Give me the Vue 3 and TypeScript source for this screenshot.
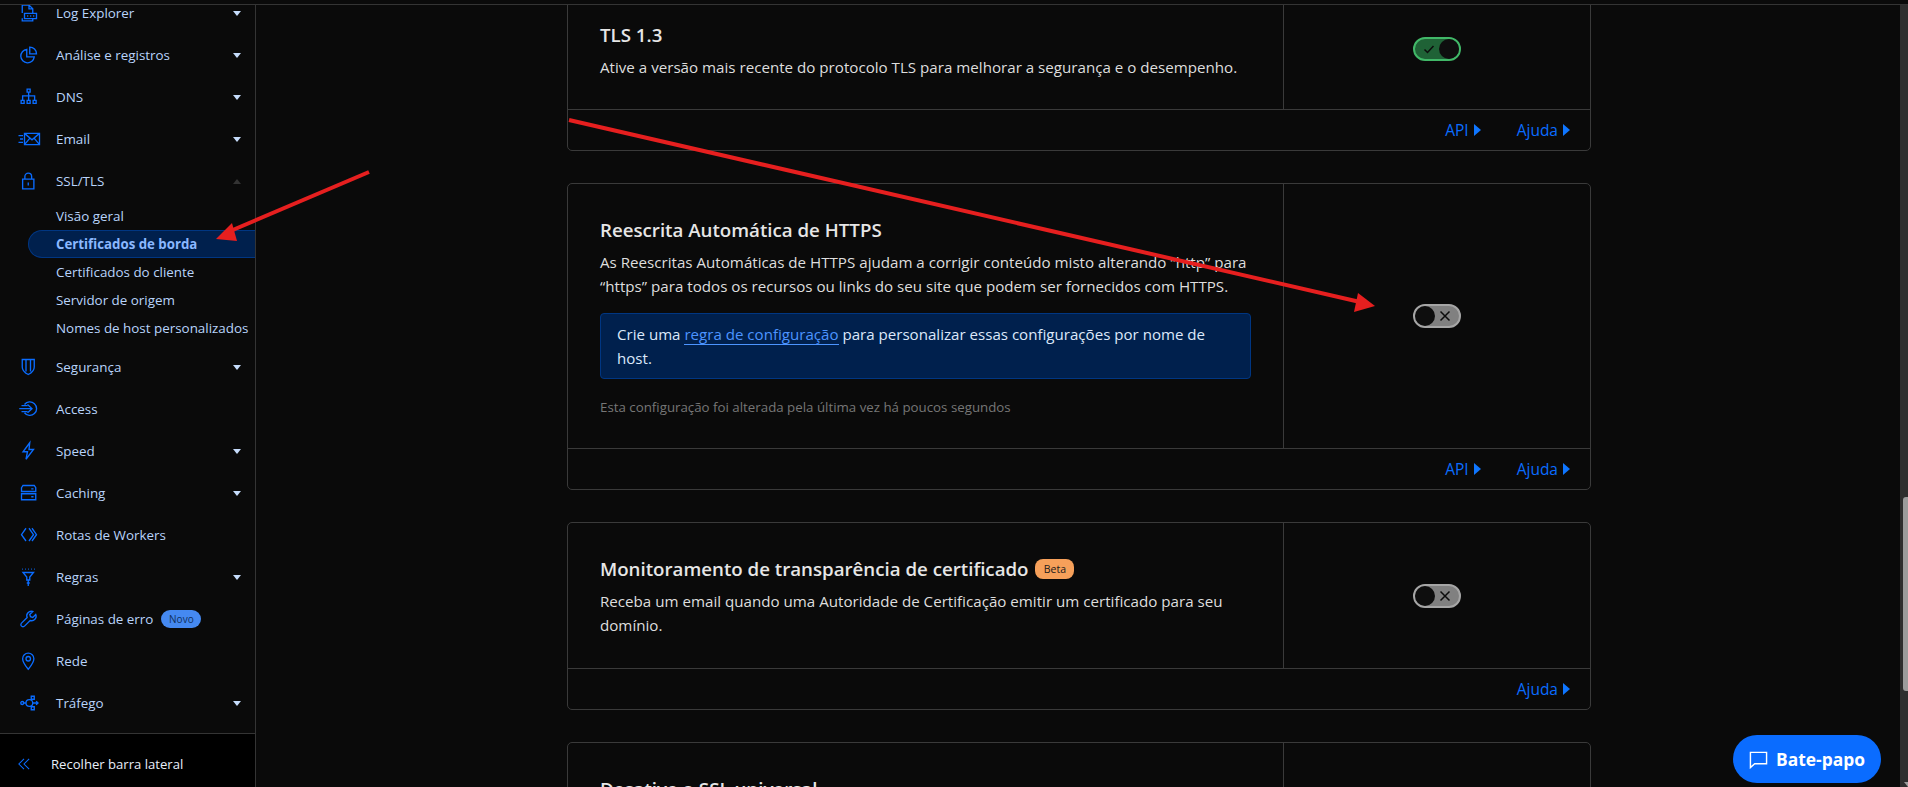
<script setup lang="ts">
interface NavItem { label: string; icon: string; caret?: 'down' | 'up'; badge?: string }

const before: NavItem[] = [
  { label: 'Log Explorer', icon: 'log', caret: 'down' },
  { label: 'Análise e registros', icon: 'pie', caret: 'down' },
  { label: 'DNS', icon: 'dns', caret: 'down' },
  { label: 'Email', icon: 'mail', caret: 'down' },
  { label: 'SSL/TLS', icon: 'lock', caret: 'up' },
]
const subs = [
  { label: 'Visão geral', active: false },
  { label: 'Certificados de borda', active: true },
  { label: 'Certificados do cliente', active: false },
  { label: 'Servidor de origem', active: false },
  { label: 'Nomes de host personalizados', active: false },
]
const after: NavItem[] = [
  { label: 'Segurança', icon: 'shield', caret: 'down' },
  { label: 'Access', icon: 'access' },
  { label: 'Speed', icon: 'bolt', caret: 'down' },
  { label: 'Caching', icon: 'cache', caret: 'down' },
  { label: 'Rotas de Workers', icon: 'workers' },
  { label: 'Regras', icon: 'rules', caret: 'down' },
  { label: 'Páginas de erro', icon: 'wrench', badge: 'Novo' },
  { label: 'Rede', icon: 'pin' },
  { label: 'Tráfego', icon: 'traffic', caret: 'down' },
]
const iconPaths: Record<string, string> = {
  log: 'M3 12V1.500h9l5 5v5M12 1.500v5h5M3 19v3.500h14V20M6 12.500h16v7H6zM9.500 16h1.500M13.500 16h1.500M17.500 16h1.500',
  pie: 'M9 4.500a9 9 0 1 0 10 10H9zM13 1.500a9 9 0 0 1 9 9h-9z',
  dns: 'M9.500 1.500h4v4h-4zM11.500 5.500v5M3.500 16v-5.500h16V16M11.500 10.500V16M1.500 16.500h4v4h-4zM9.500 16.500h4v4h-4zM17.500 16.500h4v4h-4z',
  mail: 'M6 4.500h20v15H6zM6 4.500l10 8.500 10-8.500M6 19.500l7.500-9M26 19.500l-7.500-9M-2 7.500h6M0 12h4M-2 16.500h6',
  lock: 'M3.500 9.500h15v13h-15zM6.500 9.500V6a4.500 4.500 0 0 1 9 0v3.500M11 14v4',
  shield: 'M3 2h16v10c0 5-4 8-8 10-4-2-8-5-8-10zM8 2v16M14 2v16',
  access: 'M6 6a9 9 0 1 1 0 11M-1 11.500h17M10 6l6 5.500-6 5.500M2 7.500h8M2 15.500h8',
  bolt: 'M13 1L4 13h6l-2 10 10-13h-6z',
  cache: 'M2 5l2-3h15l2 3v5H2zM2 13h19v8H2zM15 6.500h3M15 17h3',
  workers: 'M8 3L2 11.500 8 20M12 3l6 8.500-6 8.500M16 3l6 8.500-6 8.500',
  rules: 'M4 6h14l-5 6v4H9v-4zM11 16v8M9 20h4M3 1.500h1M7 1.500h1M11 1.500h1M15 1.500h1M19 1.500h1',
  wrench: 'M21 6l-4 4-3-1-1-3 4-4a6 6 0 0 0-7.500 8L2 17.500a2.500 2.500 0 0 0 4 4l7.500-7.500A6 6 0 0 0 21 6z',
  pin: 'M11 23C6 17 3.500 13 3.500 9a7.500 7.500 0 0 1 15 0c0 4-2.500 8-7.500 14zM11 6a3 3 0 1 0 0 6 3 3 0 0 0 0-6z',
  traffic: 'M1 12a2 2 0 1 0 4 0 2 2 0 0 0-4 0zM5 12h3M8 12a4.500 4.500 0 1 0 9 0 4.500 4.500 0 0 0-9 0zM15 3h4v4h-4zM15 17h4v4h-4zM15 8.500l2-1.500M15 15.500l2 1.500M17 12h7M21.500 9.500L24 12l-2.500 2.500',
}
const settingsLine = 'Esta configuração foi alterada pela última vez há poucos segundos'
</script>

<template>
  <div class="page">
    <div class="topbar"></div>
    <div class="body">
      <aside class="sidebar">
        <nav class="nav">
          <div class="nav-scroll">
            <div v-for="item in before" :key="item.label" class="nav-row">
              <svg class="nav-icon" viewBox="0 0 24 24"><path :d="iconPaths[item.icon]" /></svg>
              <span class="nav-label">{{ item.label }}</span>
              <span class="caret" :class="item.caret"></span>
            </div>
            <div class="subs">
              <div v-for="s in subs" :key="s.label" class="sub" :class="{ active: s.active }">{{ s.label }}</div>
            </div>
            <div v-for="item in after" :key="item.label" class="nav-row">
              <svg class="nav-icon" viewBox="0 0 24 24"><path :d="iconPaths[item.icon]" /></svg>
              <span class="nav-label">{{ item.label }}</span>
              <span v-if="item.badge" class="novo">{{ item.badge }}</span>
              <span v-if="item.caret" class="caret" :class="item.caret"></span>
            </div>
          </div>
        </nav>
        <div class="collapse">
          <svg class="collapse-icon" viewBox="0 0 14 14"><path d="M7 1L1 7l6 6M13 1L7 7l6 6" /></svg>
          <span>Recolher barra lateral</span>
        </div>
      </aside>

      <main class="main">
        <div class="content">
          <section class="card card-tls">
            <div class="card-top">
              <div class="card-text">
                <h3>TLS 1.3</h3>
                <p>Ative a versão mais recente do protocolo TLS para melhorar a segurança e o desempenho.</p>
              </div>
              <div class="card-side">
                <div class="toggle on">
                  <svg class="mark" viewBox="0 0 12 12"><path d="M1.500 6.500L4.500 9.500 10.500 3" /></svg>
                  <span class="knob"></span>
                </div>
              </div>
            </div>
            <div class="card-foot">
              <a class="link">API<span class="tri"></span></a>
              <a class="link">Ajuda<span class="tri"></span></a>
            </div>
          </section>

          <section class="card card-https">
            <div class="card-top">
              <div class="card-text">
                <h3>Reescrita Automática de HTTPS</h3>
                <p>As Reescritas Automáticas de HTTPS ajudam a corrigir conteúdo misto alterando “http” para “https” para todos os recursos ou links do seu site que podem ser fornecidos com HTTPS.</p>
                <div class="info">Crie uma <a class="inline-link">regra de configuração</a> para personalizar essas configurações por nome de host.</div>
                <div class="changed">{{ settingsLine }}</div>
              </div>
              <div class="card-side">
                <div class="toggle off">
                  <span class="knob"></span>
                  <svg class="mark" viewBox="0 0 12 12"><path d="M1.500 1.500l9 9M10.500 1.500l-9 9" /></svg>
                </div>
              </div>
            </div>
            <div class="card-foot">
              <a class="link">API<span class="tri"></span></a>
              <a class="link">Ajuda<span class="tri"></span></a>
            </div>
          </section>

          <section class="card card-ct">
            <div class="card-top">
              <div class="card-text">
                <h3>Monitoramento de transparência de certificado <span class="beta">Beta</span></h3>
                <p>Receba um email quando uma Autoridade de Certificação emitir um certificado para seu domínio.</p>
              </div>
              <div class="card-side">
                <div class="toggle off">
                  <span class="knob"></span>
                  <svg class="mark" viewBox="0 0 12 12"><path d="M1.500 1.500l9 9M10.500 1.500l-9 9" /></svg>
                </div>
              </div>
            </div>
            <div class="card-foot">
              <a class="link">Ajuda<span class="tri"></span></a>
            </div>
          </section>

          <section class="card card-last">
            <div class="card-top">
              <div class="card-text">
                <h3>Desative o SSL universal</h3>
              </div>
              <div class="card-side"></div>
            </div>
          </section>
        </div>
        <button class="chat">
          <svg viewBox="0 0 20 20"><path d="M1.500 2.500h17v12H6l-4.500 4z" /></svg>
          <span>Bate-papo</span>
        </button>
      </main>

      <div class="scrollbar"><div class="thumb"></div><div class="sb-arrow"></div></div>
    </div>

    <svg class="annotations" viewBox="0 0 1908 787">
      <line x1="369" y1="172" x2="228" y2="232" />
      <polygon points="216,239 232,223 237,241" />
      <line x1="569" y1="120" x2="1360" y2="302" />
      <polygon points="1375,306 1358,293 1354,312" />
    </svg>
  </div>
</template>

<style>
html, body { margin: 0; background: #0a0a0a; overflow: hidden; }
</style>

<style scoped>
.page { position: relative; width: 1908px; height: 787px; overflow: hidden; background: #0a0a0a; font-family: "Open Sans", "Noto Sans", sans-serif; display: flex; flex-direction: column; }
.topbar { height: 4px; flex: none; border-bottom: 1px solid #343434; }
.body { flex: 1; min-height: 0; display: flex; }
.sidebar { width: 255px; flex: none; border-right: 1px solid #343434; display: flex; flex-direction: column; }
.nav { flex: 1; min-height: 0; overflow: hidden; }
.nav-scroll { margin-top: -13px; }
.nav-row { height: 42px; display: flex; align-items: center; color: #b9d4fb; font-size: 13.400px; padding-right: 14px; }
.nav-icon { width: 18px; height: 18px; margin-left: 20px; margin-right: 18px; flex: none; fill: none; stroke: #0a6cff; stroke-width: 1.800; overflow: visible; }
.nav-label { white-space: nowrap; }
.caret { margin-left: auto; width: 0; height: 0; border-left: 4px solid transparent; border-right: 4px solid transparent; }
.caret.down { border-top: 5px solid #c6dcfb; }
.caret.up { border-bottom: 5px solid #333; }
.novo { margin-left: 8px; background: #4589f1; color: #10305e; font-size: 10px; line-height: 18px; height: 18px; width: 40px; text-align: center; border-radius: 9px; }
.subs { padding: 0 0 4px 28px; }
.sub { height: 28px; line-height: 28px; padding-left: 28px; color: #b9d4fb; font-size: 13.400px; white-space: nowrap; box-sizing: border-box; }
.sub.active { background: #00204d; border: 1px solid #003682; border-right: 0; border-radius: 14px 0 0 14px; padding-left: 27px; line-height: 26px; color: #8ab8ff; font-weight: 700; font-size: 13.250px; }
.collapse { height: 54px; flex: none; box-sizing: border-box; border-top: 1px solid #343434; background: #000; display: flex; align-items: center; color: #e8effa; font-size: 13.100px; padding: 6px 0 0 18px; gap: 21px; }
.collapse-icon { width: 12px; height: 12px; fill: none; stroke: #0a6cff; stroke-width: 1.200; }

.main { flex: 1; min-width: 0; position: relative; overflow: hidden; }
.content { width: 1024px; margin: -17px 0 0 311px; display: flex; flex-direction: column; gap: 32px; }
.card { border: 1px solid #3a3a3a; border-radius: 5px; color: #e6e6e6; flex: none; }
.card-top { display: flex; }
.card-text { flex: 1; min-width: 0; padding: 32px 32px 0; box-sizing: border-box; }
.card-side { width: 306px; flex: none; border-left: 1px solid #3a3a3a; display: flex; align-items: center; justify-content: center; }
.card-tls .card-top { height: 120px; }
.card-https .card-top { height: 264px; }
.card-ct .card-top { height: 145px; }
.card-last .card-top { height: 120px; }
h3 { margin: 0; font-size: 18.700px; line-height: 28px; font-weight: 600; color: #e6e6e6; }
p { margin: 6px 0 0; font-size: 15.150px; line-height: 24px; color: #dedede; }
.info { margin-top: 15px; background: #00204d; border: 1px solid #003682; border-radius: 4px; padding: 8px 16px; font-size: 15.100px; line-height: 24px; color: #dce8fb; }
.inline-link { color: #4c94ff; border-bottom: 1px solid #4c94ff; }
.changed { margin-top: 18px; font-size: 13.300px; line-height: 20px; color: #767676; }
.card-foot { height: 40px; border-top: 1px solid #3a3a3a; display: flex; justify-content: flex-end; align-items: center; gap: 36px; padding-right: 20px; }
.link { color: #0a6cff; font-size: 15.500px; display: flex; align-items: center; gap: 5px; }
.tri { width: 0; height: 0; border-left: 7px solid #0f76ff; border-top: 6px solid transparent; border-bottom: 6px solid transparent; }
.beta { display: inline-block; vertical-align: 3px; margin-left: 2px; background: #f6a05a; color: #1a1a1a; font-size: 10.500px; font-weight: 400; line-height: 20px; height: 20px; width: 39px; text-align: center; border-radius: 8px; }

.toggle { width: 48px; height: 24px; box-sizing: border-box; border-radius: 12px; border: 2px solid; display: flex; align-items: center; }
.toggle.on { background: #1f6236; border-color: #41b868; justify-content: space-between; padding-left: 8px; }
.toggle.off { background: #808080; border-color: #a6a6a6; justify-content: space-between; padding-right: 8px; }
.knob { width: 20px; height: 20px; border-radius: 50%; background: #0e0e0e; }
.mark { width: 12px; height: 12px; fill: none; stroke: #0c0c0c; stroke-width: 1.500; }

.chat { position: absolute; left: 1477px; top: 730px; width: 148px; height: 48px; border: 0; border-radius: 24px; background: #0a6cff; color: #fff; font: 700 17.400px "Open Sans", sans-serif; display: flex; align-items: center; justify-content: center; gap: 8px; padding: 0; }
.chat svg { width: 19px; height: 19px; fill: none; stroke: #fff; stroke-width: 1.500; }

.scrollbar { width: 8px; flex: none; background: #2e2e2e; position: relative; }
.thumb { position: absolute; left: 3px; right: 0; top: 492px; height: 194px; background: #9c9c9c; border-radius: 3px 0 0 3px; }
.sb-arrow { position: absolute; right: 0; bottom: 0; width: 0; height: 0; border-left: 4px solid transparent; border-top: 5px solid #9c9c9c; }

.annotations { position: absolute; inset: 0; width: 1908px; height: 787px; pointer-events: none; }
.annotations line { stroke: #e61f1f; stroke-width: 4; }
.annotations polygon { fill: #e61f1f; }
</style>
